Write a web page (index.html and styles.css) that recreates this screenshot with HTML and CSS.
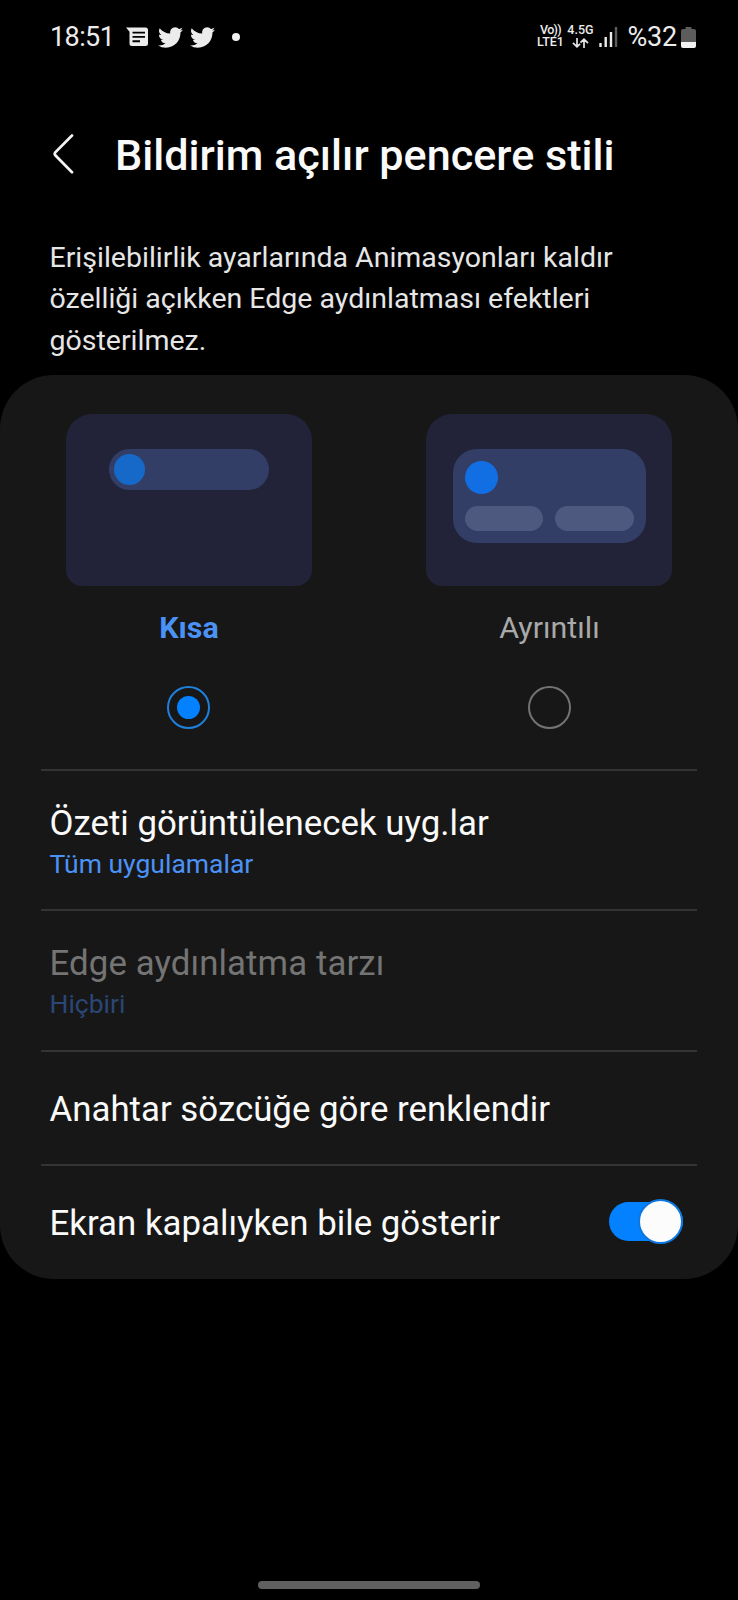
FILE: index.html
```html
<!DOCTYPE html>
<html lang="tr">
<head>
<meta charset="utf-8">
<title>Bildirim açılır pencere stili</title>
<link rel="stylesheet" href="styles.css">
</head>
<body>
<div class="screen">
  <div class="status">
    <span class="clock">18:51</span>
    <svg class="ic-msg" width="22" height="20" viewBox="0 0 22 20"><path d="M0 0.5H19.5Q22 .5 22 3V16.5Q22 19 19.5 19H6Q3.5 19 3.5 16.500V4.800Z" fill="#ececec"/><path d="M6.500 5.600H19M6.500 9.900H19M6.500 14.200H14" stroke="#000" stroke-width="1.900"/></svg>
    <svg class="ic-bird" width="25" height="21" viewBox="0 2 24 20" preserveAspectRatio="none"><path fill="#ececec" d="M23.950 4.570a10 10 0 0 1-2.820.770 4.960 4.960 0 0 0 2.160-2.720c-.950.550-2.010.960-3.130 1.180a4.920 4.920 0 0 0-8.380 4.480C7.690 8.090 4.070 6.130 1.640 3.160a4.920 4.920 0 0 0 1.520 6.570 4.900 4.900 0 0 1-2.230-.610v.060a4.920 4.920 0 0 0 3.950 4.830 5 5 0 0 1-2.210.080 4.940 4.940 0 0 0 4.600 3.420A9.870 9.870 0 0 1 0 19.540a14 14 0 0 0 7.550 2.210c9.050 0 14-7.500 14-13.980 0-.210 0-.420-.020-.630a9.940 9.940 0 0 0 2.420-2.570z"/></svg>
    <svg class="ic-bird" width="25" height="21" viewBox="0 2 24 20" preserveAspectRatio="none"><path fill="#ececec" d="M23.950 4.570a10 10 0 0 1-2.820.770 4.960 4.960 0 0 0 2.160-2.720c-.950.550-2.010.960-3.130 1.180a4.920 4.920 0 0 0-8.380 4.480C7.690 8.090 4.070 6.130 1.640 3.160a4.920 4.920 0 0 0 1.520 6.570 4.900 4.900 0 0 1-2.230-.610v.060a4.920 4.920 0 0 0 3.950 4.830 5 5 0 0 1-2.210.080 4.940 4.940 0 0 0 4.600 3.420A9.870 9.870 0 0 1 0 19.540a14 14 0 0 0 7.550 2.210c9.050 0 14-7.500 14-13.980 0-.210 0-.420-.020-.630a9.940 9.940 0 0 0 2.420-2.570z"/></svg>
    <span class="more-dot"></span>
    <span class="spacer"></span>
    <div class="volte"><span class="vo">Vo))</span><span>LTE1</span></div>
    <div class="net"><span>4.5G</span>
      <svg width="17" height="10" viewBox="0 0 17 10"><path d="M5 0V8.500M1 4.800L5 8.800L8 5.800M12 10V1.200M8.500 4.700L12 1.200L16 5.200" fill="none" stroke="#e6e6e6" stroke-width="1.700"/></svg>
    </div>
    <svg class="signal" width="20" height="20" viewBox="0 0 20 20"><path d="M2.500 16V20M7.700 10V20M13 5V20" stroke="#ececec" stroke-width="2.400"/><path d="M18 0V20" stroke="#5c5c5c" stroke-width="2.400"/></svg>
    <span class="percent">%32</span>
    <svg class="battery" width="15" height="21" viewBox="0 0 15 21"><path d="M4.500 0H10.500V2H13Q15 2 15 4V15H0V4Q0 2 2 2H4.500Z" fill="#5c5c5c"/><path d="M0 15H15V19Q15 21 13 21H2Q0 21 0 19Z" fill="#f2f2f2"/></svg>
  </div>

  <div class="header">
    <svg width="22" height="40" viewBox="0 0 22 40"><path d="M20 1.500L3.300 18.300Q2.100 19.800 3.300 21.300L20 38.200" fill="none" stroke="#f4f4f4" stroke-width="2.700" stroke-linecap="round"/></svg>
    <h1 class="title">Bildirim açılır pencere stili</h1>
  </div>

  <p class="description">Erişilebilirlik ayarlarında Animasyonları kaldır<br>özelliği açıkken Edge aydınlatması efektleri<br>gösterilmez.</p>

  <div class="card">
    <div class="options">
      <div class="option">
        <div class="preview"><div class="pill"><span class="pill-dot"></span></div></div>
        <div class="label selected">Kısa</div>
        <div class="radio on"></div>
      </div>
      <div class="option">
        <div class="preview">
          <div class="popup"><span class="popup-dot"></span><div class="buttons"><span></span><span></span></div></div>
        </div>
        <div class="label">Ayrıntılı</div>
        <div class="radio"></div>
      </div>
    </div>
    <div class="row tall"><div class="row-title">Özeti görüntülenecek uyg.lar</div><div class="row-sub">Tüm uygulamalar</div></div>
    <div class="row tall disabled"><div class="row-title">Edge aydınlatma tarzı</div><div class="row-sub">Hiçbiri</div></div>
    <div class="row short"><div class="row-title">Anahtar sözcüğe göre renklendir</div></div>
    <div class="row switch-row"><div class="row-title">Ekran kapalıyken bile gösterir</div><div class="toggle"><span class="knob"></span></div></div>
  </div>
  <div class="home-bar"></div>
</div>
</body>
</html>
```

FILE: styles.css
```css
* { box-sizing: border-box; }
body { margin: 0; background: #000; font-family: Roboto, "Noto Sans", sans-serif; }
.screen { width: 738px; height: 1600px; display: flex; flex-direction: column; overflow: hidden; white-space: nowrap; }
.screen svg { display: block; flex: none; }

.status { height: 74px; display: flex; align-items: center; padding: 0 42px 0 50px; color: #ececec; }
.clock { width: 76px; font-size: 27px; line-height: 32px; letter-spacing: -0.600px; }
.ic-msg { margin-right: 10px; }
.ic-bird { margin-right: 7px; }
.more-dot { width: 8px; height: 8px; border-radius: 50%; background: #f2f2f2; margin-left: 10px; margin-top: -1px; }
.spacer { flex: 1; }
.volte { width: 28px; margin-right: 2px; margin-top: -2px; font-size: 12.500px; line-height: 12px; font-weight: 500; display: flex; flex-direction: column; align-items: center; }
.volte span { height: 12px; }
.vo { letter-spacing: -0.700px; }
.net { width: 28px; margin-right: 4px; margin-top: -2px; font-size: 12.500px; line-height: 12px; font-weight: 500; display: flex; flex-direction: column; align-items: center; }
.net svg { margin-top: 2px; }
.signal { margin-right: 9px; margin-top: -1px; }
.percent { font-size: 27px; line-height: 32px; margin-right: 4px; letter-spacing: -0.200px; }

.header { height: 162.600px; padding: 54px 0 0 52px; display: flex; align-items: flex-start; }
.header svg { margin-top: 6px; }
.title { margin: 0 0 0 41px; color: #fafafa; font-size: 43.150px; line-height: 56px; font-weight: 500; }

.description { margin: 0; height: 138.400px; padding-left: 49.500px; color: #e6e6e6; font-size: 28.500px; line-height: 41.670px; }

.card { height: 904px; background: #171717; border-radius: 54px; }
.options { height: 396px; display: flex; padding: 39px 66px 0; justify-content: space-between; }
.option { width: 246px; display: flex; flex-direction: column; align-items: center; }
.preview { width: 246px; height: 172px; background: #222338; border-radius: 26px 26px 16px 16px; padding-top: 35px; display: flex; justify-content: center; align-items: flex-start; }
.pill { width: 160px; height: 41px; border-radius: 21px; background: #333e66; padding: 5px; }
.pill-dot { display: block; width: 31px; height: 31px; border-radius: 50%; background: #1669c9; }
.popup { width: 193px; height: 94px; border-radius: 24px; background: #333e66; padding: 12px; }
.popup-dot { display: block; width: 33px; height: 33px; border-radius: 50%; background: #126fe3; }
.buttons { margin-top: 12px; display: flex; gap: 12px; }
.buttons span { flex: 1; height: 25px; border-radius: 12.500px; background: #4d597f; }
.label { margin-top: 21px; height: 40px; padding-left: 1px; font-size: 30.400px; line-height: 41px; color: #a9a9a9; }
.label.selected { padding-left: 0; color: #4b92f6; font-weight: 700; }
.radio { margin-top: 39px; width: 43px; height: 43px; border-radius: 50%; border: 2px solid #737373; display: flex; align-items: center; justify-content: center; }
.radio.on { margin-right: 1px; border-color: #1e7fdc; }
.radio.on::after { content: ""; width: 23px; height: 23px; border-radius: 50%; background: #0381fe; }

.row { color: #fafafa; margin: -2px 41px 0; padding-left: 8.500px; border-top: 2px solid #343434; }
.tall { height: 142.300px; padding-top: 32px; }
.row-title { font-size: 34.850px; line-height: 42px; }
.tall .row-title { line-height: 41px; }
.row-sub { font-size: 26.500px; line-height: 40px; color: #4b92f6; }
.disabled .row-title { color: #747474; letter-spacing: 0.080px; }
.disabled .row-sub { color: #2a4775; }
.short { height: 116.900px; padding-top: 37px; }
.switch-row { height: 115px; display: flex; align-items: flex-start; justify-content: space-between; padding-top: 37px; padding-right: 14.500px; }
.toggle { width: 74px; height: 39px; margin-top: -1px; border-radius: 20px; background: #0381fe; display: flex; align-items: center; justify-content: flex-end; }
.knob { flex: none; width: 45px; height: 45px; border-radius: 50%; background: #fcfcfc; border: 2px solid #0d78e2; }

.home-bar { width: 222px; height: 8px; border-radius: 4px; background: #606060; margin: 302px auto 0; }
```
